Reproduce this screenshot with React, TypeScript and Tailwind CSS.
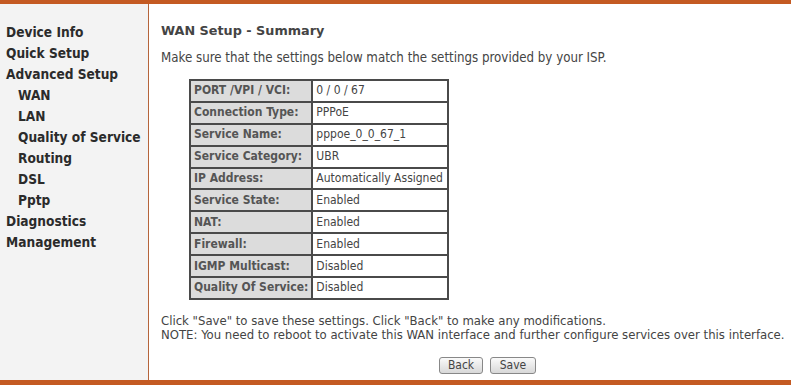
import React from "react";

const rows: [string, string][] = [
  ["PORT /VPI / VCI:", "0 / 0 / 67"],
  ["Connection Type:", "PPPoE"],
  ["Service Name:", "pppoe_0_0_67_1"],
  ["Service Category:", "UBR"],
  ["IP Address:", "Automatically Assigned"],
  ["Service State:", "Enabled"],
  ["NAT:", "Enabled"],
  ["Firewall:", "Enabled"],
  ["IGMP Multicast:", "Disabled"],
  ["Quality Of Service:", "Disabled"],
];

const menu: [string, boolean][] = [
  ["Device Info", false],
  ["Quick Setup", false],
  ["Advanced Setup", false],
  ["WAN", true],
  ["LAN", true],
  ["Quality of Service", true],
  ["Routing", true],
  ["DSL", true],
  ["Pptp", true],
  ["Diagnostics", false],
  ["Management", false],
];

export default function App() {
  return (
    <div
      className="w-[791px] h-[385px] bg-white flex flex-col overflow-hidden"
      style={{ fontFamily: '"DejaVu Sans Condensed", "DejaVu Sans", sans-serif' }}
    >
      <div className="h-[4px] bg-[#c45a22]" />
      <div className="flex flex-1">
        <div className="w-[149px] bg-[#f3f3f3] border-r border-[#b5643a] pt-[18px]">
          {menu.map(([t, sub]) => (
            <div
              key={t}
              className={`h-[21px] leading-[21px] text-[13.6px] font-bold text-[#2b2b2b] ${sub ? "pl-[18px]" : "pl-[6px]"}`}
            >
              {t}
            </div>
          ))}
        </div>
        <div className="flex-1 pl-[12px] pt-[18px] text-[13px] text-[#444]">
          <div
            className="font-bold h-[18px] leading-[18px] text-[12.8px]"
            style={{ fontFamily: '"DejaVu Sans", sans-serif' }}
          >
            WAN Setup - Summary
          </div>
          <div className="mt-[9px] h-[18px] leading-[18px] text-[13.2px]">
            Make sure that the settings below match the settings provided by your ISP.
          </div>
          <table className="ml-[28px] mt-[12px] border-collapse border border-[#555] text-[12px]">
            <tbody>
              {rows.map(([k, v]) => (
                <tr key={k} className="h-[21.9px]">
                  <td className="w-[121px] border-2 border-[#4a4a4a] bg-[#dcdcdc] px-[3px] font-bold text-[#555] leading-[17px] whitespace-nowrap">
                    {k}
                  </td>
                  <td className="w-[136px] border-2 border-[#4a4a4a] bg-white px-[3px] leading-[17px] whitespace-nowrap">
                    {v}
                  </td>
                </tr>
              ))}
            </tbody>
          </table>
          <div className="mt-[14px] leading-[14px]">
            Click "Save" to save these settings. Click "Back" to make any modifications.
            <br />
            NOTE: You need to reboot to activate this WAN interface and further configure services over this interface.
          </div>
          <div className="flex gap-[7px] pl-[278px] mt-[15px]">
            <button className="w-[44px] h-[17px] text-[12px] leading-[15px] text-[#444] border border-[#888] rounded-[3px] bg-gradient-to-b from-[#fafafa] to-[#d8d8d8]">
              Back
            </button>
            <button className="w-[46px] h-[17px] text-[12px] leading-[15px] text-[#444] border border-[#888] rounded-[3px] bg-gradient-to-b from-[#fafafa] to-[#d8d8d8]">
              Save
            </button>
          </div>
        </div>
      </div>
      <div className="h-[5px] bg-[#c45a22]" />
    </div>
  );
}
